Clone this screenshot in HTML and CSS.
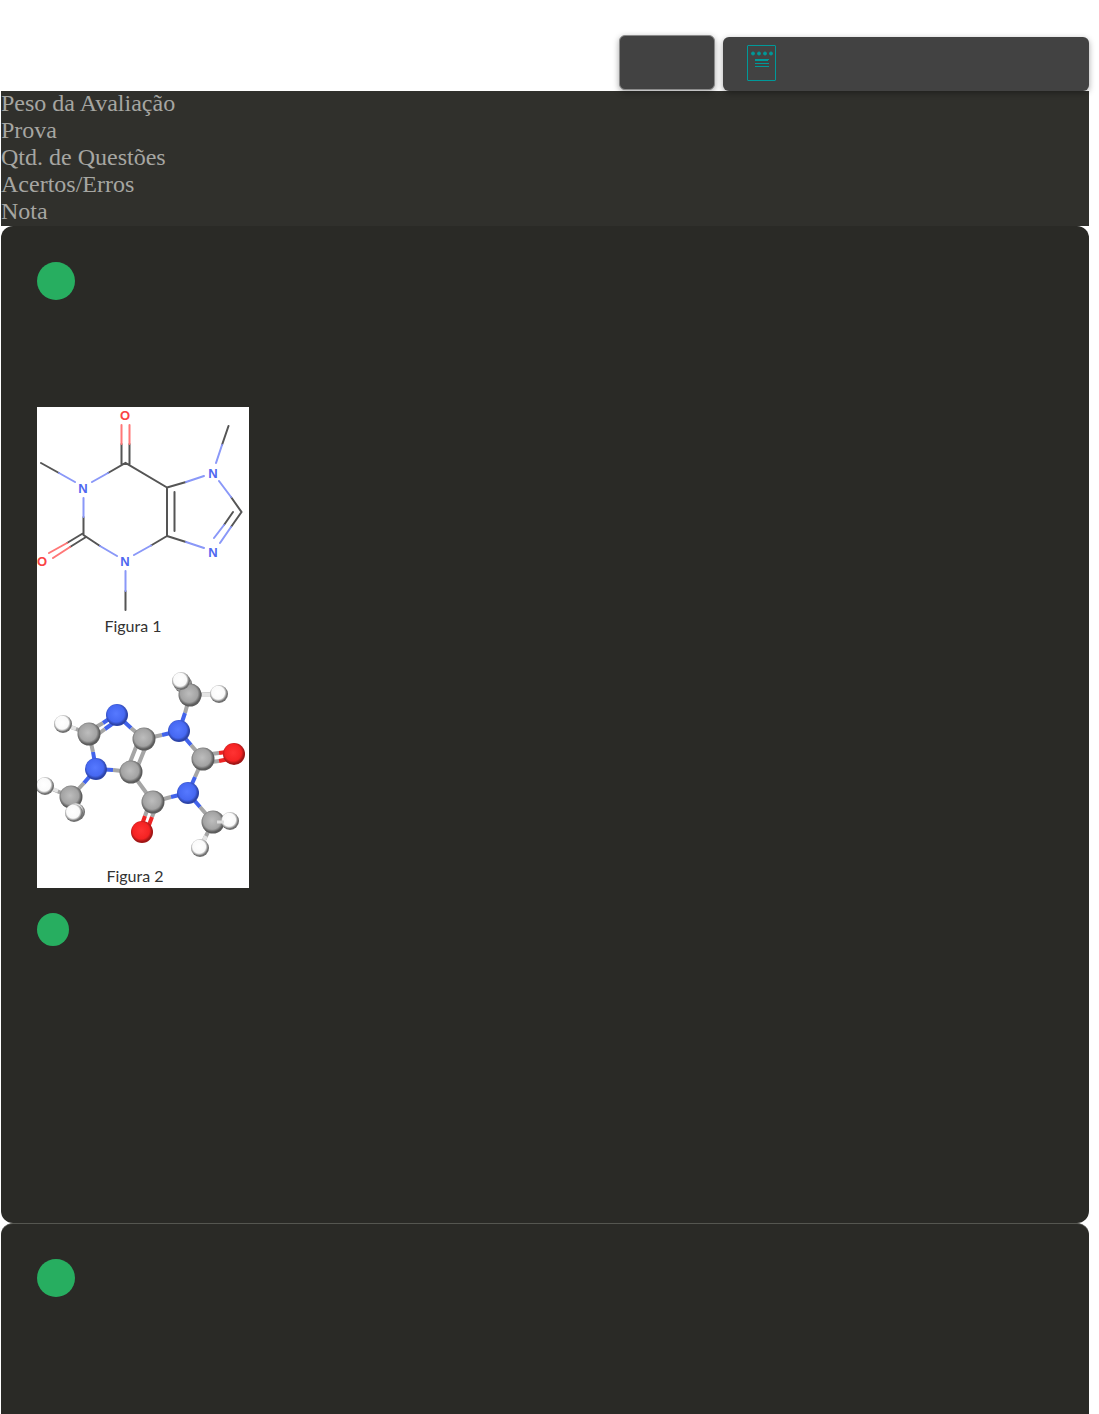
FILE: index.html
```
<!DOCTYPE html>
<html lang="pt-BR">
<head>
  <meta charset="UTF-8">
  <title>Avaliação</title>
  <meta name="viewport" content="width=device-width, initial-scale=1.0">
  <link rel="stylesheet" href="styles.css">
</head>
<body>
  <header class="toolbar">
    <div class="tab tab-small"></div>
    <div class="tab tab-wide">
      <svg class="tab-icon" width="30" height="37" viewBox="0 0 30 37">
        <rect x="0.5" y="0.5" width="28" height="35" rx="0.5" />
        <g class="dots">
          <circle cx="6" cy="8.500" r="1.500" />
          <circle cx="12" cy="8.500" r="1.500" />
          <circle cx="18" cy="8.500" r="1.500" />
          <circle cx="24" cy="8.500" r="1.500" />
        </g>
        <path d="M8 14.500H22M8 15.500H21M8 18.500H22M8 21.500H22" />
      </svg>
    </div>
  </header>

  <main>
    <section class="summary">
      <div>Peso da Avaliação</div>
      <div>Prova</div>
      <div>Qtd. de Questões</div>
      <div>Acertos/Erros</div>
      <div>Nota</div>
    </section>

    <article class="question">
      <div class="number"></div>
      <div class="statement"></div>

      <svg class="figure" width="212" height="481" viewBox="0 0 212 481" role="img" aria-label="Estrutura da cafeína">
        <defs>
          <radialGradient id="carbon" cx="46%" cy="44%">
            <stop offset="0" stop-color="#bdbdbd" />
            <stop offset="0.75" stop-color="#a3a3a3" />
            <stop offset="1" stop-color="#5c5c5c" />
          </radialGradient>
          <radialGradient id="nitrogen" cx="46%" cy="44%">
            <stop offset="0" stop-color="#5679ff" />
            <stop offset="0.75" stop-color="#4668f2" />
            <stop offset="1" stop-color="#2c43a8" />
          </radialGradient>
          <radialGradient id="oxygen" cx="46%" cy="44%">
            <stop offset="0" stop-color="#ff3333" />
            <stop offset="0.75" stop-color="#f52323" />
            <stop offset="1" stop-color="#a01515" />
          </radialGradient>
          <radialGradient id="hydrogen" cx="45%" cy="43%">
            <stop offset="0" stop-color="#fff" />
            <stop offset="0.72" stop-color="#fafafa" />
            <stop offset="1" stop-color="#707070" />
          </radialGradient>
        </defs>
        <rect width="212" height="481" fill="#fff" />

        <!-- Figura 1 -->
        <g class="bond">
          <path d="M4 56L22 66M71 66L88.500 56L130 80.500V129L114 138.500M84.500 58V37M92.500 58V37M137.500 85V124M130 80.500L149 75M130 129L149 135M185 38L191.500 19M194 90L204.500 105L194 120M196 105L187 118M46.500 110V128L63 139M46.500 126L30 136M49 130L33 140M88.500 184V203" />
          <path class="blue" d="M22 66L38 75M55 75L71 66M46.500 91V110M63 139L80 149M97 148L114 138.500M88.500 164V184M149 75L167 69M149 135L167 141M179 56L185 38M182 74L194 90M194 120L183 136M187 118L177 131" />
          <path class="red" d="M84.500 37V18M92.500 37V18M30 136L12 146M33 140L16 151" />
        </g>
        <g class="atom blue">
          <text x="46" y="86">N</text>
          <text x="88" y="159">N</text>
          <text x="176" y="71">N</text>
          <text x="176" y="150">N</text>
        </g>
        <g class="atom red">
          <text x="88" y="13">O</text>
          <text x="5" y="159">O</text>
        </g>
        <text class="caption" x="96" y="225">Figura 1</text>

        <!-- Figura 2 -->
        <g class="stick">
          <path d="M26 317L52 327L56 345M107 332L94 321M52 324L66 316M56 331L68 322M107 332L125 328M90 363L103 330M98 366L111 334M94 365L76 363M94 365L116 395L134 390M113 395L108 409M120 397L115 410M166 352L154 338M166 352L158 370M166 348L182 346M166 356L182 354M153 288L148 306M153 288L144 275M153 288L182 287M34 390L47 376M34 390L8 379M34 390L37 406M176 415L163 400M176 415L193 414M176 415L163 441" />
          <path class="white" d="M26 317L39 322M165 288L182 287M21 384L8 379M169 429L163 441" />
          <path class="blue" d="M78 308L66 316M82 312L68 322M80 308L94 321M59 362L56 345M59 362L76 363M59 362L47 376M142 324L125 328M142 324L148 306M142 324L154 338M151 386L158 370M151 386L134 390M151 386L163 400" />
          <path class="red" d="M182 346L197 344M182 354L197 351M108 409L103 423M115 410L109 426" />
        </g>
        <g fill="url(#carbon)">
          <circle cx="52" cy="327" r="11.500" />
          <circle cx="107" cy="332" r="11.500" />
          <circle cx="94" cy="365" r="11.500" />
          <circle cx="116" cy="395" r="11.500" />
          <circle cx="166" cy="352" r="11.500" />
          <circle cx="34" cy="390" r="11.500" />
          <circle cx="176" cy="415" r="11.500" />
        </g>
        <g fill="url(#nitrogen)">
          <circle cx="80" cy="308" r="11" />
          <circle cx="59" cy="362" r="11" />
          <circle cx="142" cy="324" r="11" />
          <circle cx="151" cy="386" r="11" />
        </g>
        <g fill="url(#oxygen)">
          <circle cx="197" cy="347" r="11" />
          <circle cx="105" cy="425" r="11" />
        </g>
        <g fill="url(#hydrogen)">
          <circle cx="26" cy="317" r="9" />
          <circle cx="146" cy="277" r="9" />
          <circle cx="182" cy="287" r="9" />
          <circle cx="8" cy="379" r="9" />
          <circle cx="39" cy="405" r="9" />
          <circle cx="37" cy="406" r="9" />
          <circle cx="193" cy="414" r="9" />
          <circle cx="163" cy="441" r="9" />
        </g>
        <circle cx="153" cy="288" r="11.500" fill="url(#carbon)" />
        <circle cx="144" cy="274" r="9" fill="url(#hydrogen)" />
        <path class="cleft" d="M180 415H187" />
        <text class="caption" x="98" y="475">Figura 2</text>
      </svg>

      <div class="option"></div>
      <div class="answers"></div>
    </article>

    <article class="question">
      <div class="number"></div>
      <div class="statement"></div>
    </article>
  </main>
</body>
</html>
```
FILE: styles.css
```
:root {
  --card: #2a2a26;
  --bar: #30302c;
  --tab: #424242;
  --green: #27ae60;
  --teal: #009999;
  --text: #a6a6a2;
}

* {
  box-sizing: border-box;
  margin: 0;
  padding: 0;
}

body {
  background: #fff;
  color: var(--text);
  font-family: "Liberation Serif", serif;
  font-size: 24px;
  line-height: 25px;
  padding: 0 10px 0 1px;
}

.toolbar {
  position: relative;
  display: flex;
  justify-content: flex-end;
  align-items: flex-end;
  gap: 8px;
  padding-top: 35px;
}

.tab {
  height: 54px;
  background: var(--tab);
  border-radius: 6px;
  box-shadow: 0 2px 6px rgba(0, 0, 0, 0.35);
}

.tab-small {
  width: 96px;
  height: 55px;
  margin-bottom: 1px;
  border: 1px solid #8a8a8a;
}

.tab-wide {
  width: 366px;
  padding: 8px 24px;
}

.tab-icon {
  display: block;
  fill: none;
  stroke: var(--teal);
}

.dots {
  fill: var(--teal);
}

.summary {
  background: var(--bar);
}

.summary div {
  padding-bottom: 2px;
}

.question {
  background: var(--card);
  border-radius: 12px;
  padding: 36px;
}

.question + .question {
  border-top: 1px solid #555650;
  padding-top: 35px;
}

.number {
  width: 38px;
  height: 38px;
  border-radius: 50%;
  background: var(--green);
}

.statement {
  min-height: 107px;
}

.figure {
  display: block;
}

.option {
  width: 32px;
  height: 33px;
  margin-top: 25px;
  border-radius: 50%;
  background: var(--green);
}

.answers {
  min-height: 241px;
}

.bond {
  fill: none;
  stroke: #555;
  stroke-width: 2;
  stroke-linecap: round;
}

.bond .blue {
  stroke: #8a98f8;
}

.bond .red {
  stroke: #f77;
}

.atom {
  font: bold 13px "Liberation Sans", sans-serif;
  text-anchor: middle;
}

.atom.blue {
  fill: #5068f0;
}

.atom.red {
  fill: #fa4444;
}

.caption {
  font: 16px Lato, sans-serif;
  fill: #333;
  text-anchor: middle;
}

.stick {
  fill: none;
  stroke: #a5a5a5;
  stroke-width: 4;
}

.stick .white {
  stroke: #e4e4e4;
}

.stick .blue {
  stroke: #4263eb;
}

.stick .red {
  stroke: #ee2424;
}

.cleft {
  stroke: #ddd;
  stroke-width: 3;
}
```
